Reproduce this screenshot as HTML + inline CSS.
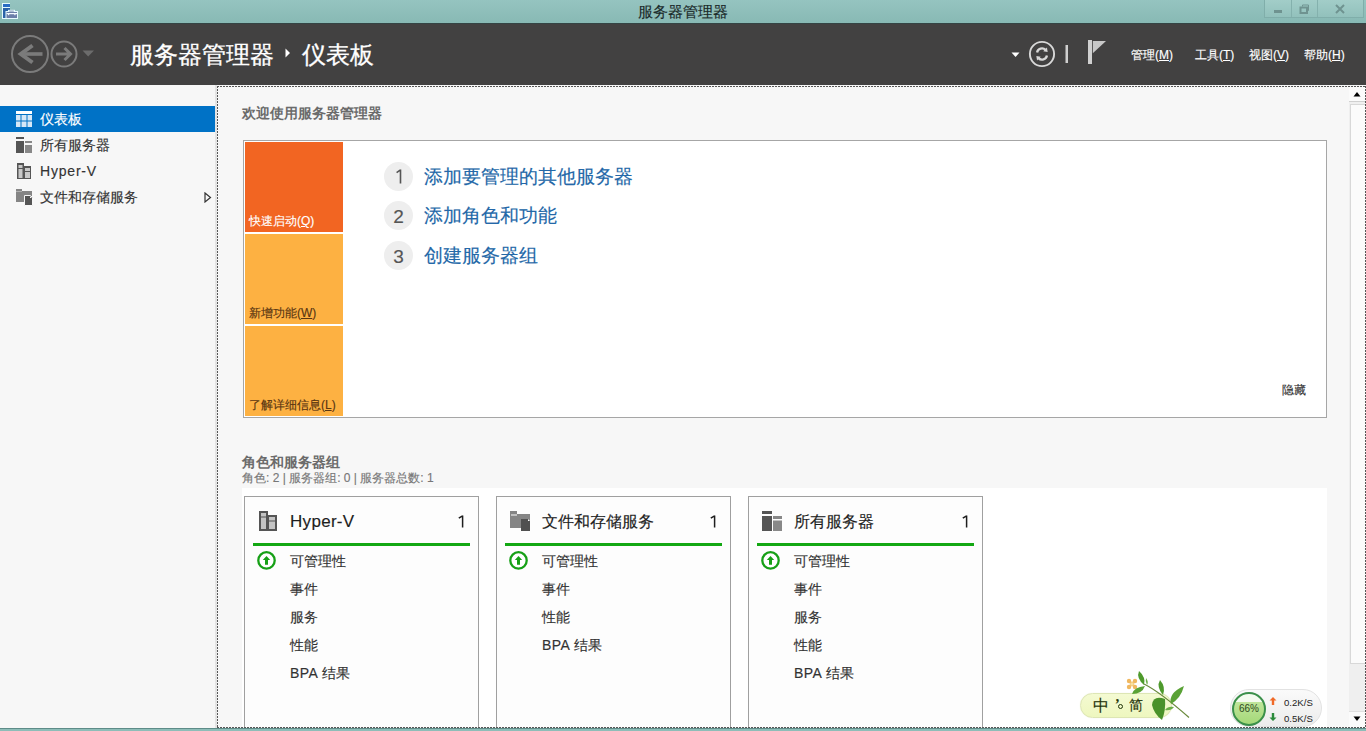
<!DOCTYPE html>
<html><head><meta charset="utf-8">
<style>
*{margin:0;padding:0;box-sizing:border-box}
html,body{width:1366px;height:731px;overflow:hidden;background:#f7f7f7;font-family:"Liberation Sans",sans-serif;color:#333;-webkit-text-stroke-width:0.15px}
.abs{position:absolute}
#titlebar{left:0;top:0;width:1366px;height:23px;background:linear-gradient(#95c4c0,#88b9b4)}
#title{left:0;top:0;width:1366px;text-align:center;font-size:15px;line-height:23px;color:#1b2b2b}
#header{left:0;top:23px;width:1366px;height:62px;background:#424141}
#nav{left:0;top:85px;width:215px;height:643px;background:#f7f7f7}
.navitem{position:absolute;left:0;width:215px;height:26px;font-size:14px;line-height:26px;color:#333}
.navitem span{position:absolute;left:40px;top:0}
.navitem svg{position:absolute;left:16px}
#bottom{left:0;top:728px;width:1366px;height:3px;background:#8dbdb8;border-top:1px solid #5e8c88}
.dotx{height:1px;background:repeating-linear-gradient(90deg,#575757 0 2px,transparent 2px 3px)}
.doty{width:1px;background:repeating-linear-gradient(180deg,#575757 0 2px,transparent 2px 3px)}
.h2{font-size:14px;font-weight:bold;color:#6b6b6b;-webkit-text-stroke-width:0}
#welcome{left:243px;top:140px;width:1084px;height:278px;background:#fff;border:1px solid #a6a6a6}
.tile{position:absolute;left:1px;width:98px;height:90px;font-size:12px}
.tile span{position:absolute;left:4px;bottom:4px;line-height:14px}
.step{position:absolute;left:140px;height:30px}
.step .c{position:absolute;left:0;top:0;width:29px;height:29px;border-radius:50%;background:#eeeeee;color:#555;font-size:19px;line-height:31px;text-align:center}
.step .t{position:absolute;left:40px;top:0;white-space:nowrap;font-size:18.67px;line-height:29px;color:#2468a8}
.card{position:absolute;top:496px;width:235px;height:231px;border:1px solid #a0a0a0;border-bottom:none;background:#fdfdfd}
.card .ttl{position:absolute;left:45px;top:14px;font-size:16px;line-height:22px;color:#1e1e1e;white-space:nowrap}
.card .cnt{position:absolute;right:13px;top:14px;font-size:17px;line-height:22px;color:#1e1e1e}
.card .cnt1{position:absolute;left:213px;top:18px}
.card .gl{position:absolute;left:8px;top:46px;width:217px;height:3px;background:#13a813}
.card .row{position:absolute;left:45px;font-size:14px;line-height:20px;color:#333;white-space:nowrap}
.card .ok{position:absolute;left:12px;top:54px}
.card .ico{position:absolute;left:14px;top:14px}
</style></head><body>
<div id="titlebar" class="abs"></div>
<!-- app icon -->
<svg class="abs" style="left:2px;top:3px" width="16" height="16" viewBox="0 0 16 16">
  <path d="M0 0H8V8H16V16H0Z" fill="#e6fbff"/>
  <rect x="1" y="1" width="7" height="3" fill="#2a6cc4"/>
  <rect x="1" y="5" width="7" height="10" fill="#2a62a8"/>
  <rect x="3.5" y="8" width="12" height="8" fill="#e6fbff"/>
  <rect x="6" y="6.8" width="7" height="2" fill="#e6fbff"/>
  <rect x="7.2" y="7.6" width="4.6" height="1" fill="#8090b0"/>
  <rect x="4.5" y="9" width="10.5" height="6" fill="#6b7fa9"/>
  <rect x="4.5" y="10" width="10.5" height="1.2" fill="#f4fbff"/>
  <rect x="6" y="11" width="1.2" height="1.2" fill="#f4fbff"/>
  <rect x="12.3" y="11" width="1.2" height="1.2" fill="#f4fbff"/>
</svg>
<div id="title" class="abs">服务器管理器</div>
<!-- window buttons -->
<div class="abs" style="left:1264px;top:0;width:100px;height:18px;border:1px solid #80aeaa;border-top:none;background:linear-gradient(#a2cdc8,#92c1bc)"></div>
<div class="abs" style="left:1291px;top:0;width:1px;height:17px;background:#84b1ad"></div>
<div class="abs" style="left:1317px;top:0;width:1px;height:17px;background:#84b1ad"></div>
<div class="abs" style="left:1274px;top:10px;width:8px;height:2.5px;background:#6f9390"></div>
<svg class="abs" style="left:1299px;top:4px" width="11" height="10" viewBox="0 0 11 10"><path d="M3.5 2.5V1H9.5V6.5H8" fill="none" stroke="#6f9390" stroke-width="1"/><rect x="1.5" y="3.5" width="6.5" height="5.5" fill="none" stroke="#6f9390" stroke-width="2"/></svg>
<svg class="abs" style="left:1335px;top:4px" width="10" height="10" viewBox="0 0 10 10"><path d="M1 1L9 9M9 1L1 9" stroke="#6f9390" stroke-width="2"/></svg>

<div id="header" class="abs"></div>
<div class="abs" style="left:0;top:23px;width:1366px;height:1px;background:#344444"></div>
<!-- back/forward -->
<svg class="abs" style="left:0;top:23px" width="100" height="62" viewBox="0 0 100 62">
  <circle cx="30" cy="31" r="18" fill="none" stroke="#7b7b7b" stroke-width="2"/>
  <path d="M21 31H42.5" fill="none" stroke="#7b7b7b" stroke-width="3.6"/><path d="M32.5 22.5L20.8 31L32.5 39.5" fill="none" stroke="#7b7b7b" stroke-width="4" stroke-linejoin="miter"/>
  <circle cx="64" cy="31" r="12.5" fill="none" stroke="#7b7b7b" stroke-width="2"/>
  <path d="M56 31H70M64.5 25L70.5 31L64.5 37" fill="none" stroke="#7b7b7b" stroke-width="3"/>
  <path d="M82.5 27.5H94L88.2 33.5Z" fill="#6c6c6c"/>
</svg>
<div class="abs" style="left:130px;top:39px;font-size:24px;line-height:32px;color:#fff;white-space:nowrap;-webkit-text-stroke:0.3px #fff">服务器管理器</div>
<svg class="abs" style="left:285px;top:48px" width="6" height="10" viewBox="0 0 6 10"><path d="M0.5 0.5L5 5L0.5 9.5Z" fill="#fff"/></svg>
<div class="abs" style="left:302px;top:39px;font-size:24px;line-height:32px;color:#fff;white-space:nowrap;-webkit-text-stroke:0.3px #fff">仪表板</div>
<!-- right header -->
<svg class="abs" style="left:1000px;top:23px" width="120" height="62" viewBox="0 0 120 62">
  <path d="M11.5 29.5H19.5L15.5 34Z" fill="#fff"/>
  <circle cx="42" cy="31" r="12.1" fill="none" stroke="#d8d8d8" stroke-width="1.9"/>
  <path d="M37.08 29.53A5.0 5.0 0 0 1 45.54 26.86" fill="none" stroke="#d8d8d8" stroke-width="2.3"/><path d="M47.66 28.99L46.95 24.60L43.27 28.28Z" fill="#d8d8d8"/><path d="M46.92 32.47A5.0 5.0 0 0 1 38.46 35.14" fill="none" stroke="#d8d8d8" stroke-width="2.3"/><path d="M36.34 33.01L37.05 37.40L40.73 33.72Z" fill="#d8d8d8"/>
  <rect x="65.5" y="22" width="2.5" height="18" fill="#cfcfcf"/>
  <rect x="88" y="17" width="4" height="24" fill="#d0d0d0"/>
  <path d="M92.8 18H106L92.8 30.2Z" fill="#c8c8c8"/>
</svg>
<div class="abs" style="left:1131px;top:47px;font-size:12px;line-height:16px;color:#fff;white-space:nowrap">管理(<u>M</u>)</div>
<div class="abs" style="left:1195px;top:47px;font-size:12px;line-height:16px;color:#fff;white-space:nowrap">工具(<u>T</u>)</div>
<div class="abs" style="left:1249px;top:47px;font-size:12px;line-height:16px;color:#fff;white-space:nowrap">视图(<u>V</u>)</div>
<div class="abs" style="left:1304px;top:47px;font-size:12px;line-height:16px;color:#fff;white-space:nowrap">帮助(<u>H</u>)</div>

<div id="nav" class="abs"></div>
<div class="abs" style="left:215px;top:85px;width:2px;height:643px;background:#e4e4e4"></div>
<div class="navitem" style="top:106px;background:#0072c6;color:#fff">
  <svg style="top:5px" width="16" height="16" viewBox="0 0 16 16"><rect x="0" y="0" width="16" height="3" fill="#fff"/><rect x="0" y="4" width="16" height="12" fill="#d6e8f7"/><rect x="4.5" y="4" width="1" height="12" fill="#0072c6"/><rect x="10.5" y="4" width="1" height="12" fill="#0072c6"/><rect x="0" y="9.5" width="16" height="1" fill="#0072c6"/></svg>
  <span>仪表板</span></div>
<div class="navitem" style="top:132px">
  <svg style="top:5px" width="16" height="16" viewBox="0 0 16 16"><rect x="0" y="0" width="8" height="2" fill="#555"/><rect x="0" y="4" width="8" height="12" fill="#555"/><rect x="9" y="4" width="7" height="2" fill="#888"/><rect x="9" y="8" width="7" height="8" fill="#888"/></svg>
  <span>所有服务器</span></div>
<div class="navitem" style="top:158px">
  <svg style="top:5px" width="16" height="16" viewBox="0 0 16 16"><path d="M1 0H8V3H15V16H1Z" fill="#555"/><rect x="2.5" y="2" width="4" height="3" fill="#c8c8c8"/><rect x="2.5" y="6" width="4" height="9" fill="#c8c8c8"/><rect x="9" y="5" width="5" height="3" fill="#c8c8c8"/><rect x="9" y="9" width="5" height="6" fill="#c8c8c8"/></svg>
  <span style="letter-spacing:0.8px">Hyper-V</span></div>
<div class="navitem" style="top:184px">
  <svg style="top:5px" width="17" height="17" viewBox="0 0 17 17"><path d="M0 0H6V2H16V13H0Z" fill="#858585"/><rect x="0" y="2" width="6" height="1" fill="#b0b0b0"/><path d="M8.5 6.5H14.5L16.5 8.5V16.5H8.5Z" fill="#555" stroke="#f7f7f7" stroke-width="1"/><path d="M14 7L16 9H14Z" fill="#f7f7f7"/></svg>
  <span>文件和存储服务</span>
  <svg style="left:204px;top:8px" width="8" height="11" viewBox="0 0 8 11"><path d="M1 1L6.5 5.5L1 10Z" fill="none" stroke="#333" stroke-width="1.2"/></svg>
</div>

<div class="abs h2" style="left:242px;top:103px;line-height:20px">欢迎使用服务器管理器</div>
<div id="welcome" class="abs">
  <div class="tile" style="top:1px;background:#f26522;color:#fff"><span>快速启动(<u>Q</u>)</span></div>
  <div class="tile" style="top:93px;background:#fdb142;color:#5a3612"><span>新增功能(<u>W</u>)</span></div>
  <div class="tile" style="top:185px;background:#fdb142;color:#5a3612"><span>了解详细信息(<u>L</u>)</span></div>
  <div class="step" style="top:21px"><div class="c"><svg style="position:absolute;left:12px;top:7px" width="7" height="15" viewBox="0 0 7 15"><path d="M4.5 0.6V14.5M4.5 0.9L0.6 3.6" fill="none" stroke="#555" stroke-width="1.6"/></svg></div><div class="t">添加要管理的其他服务器</div></div>
  <div class="step" style="top:60px"><div class="c">2</div><div class="t">添加角色和功能</div></div>
  <div class="step" style="top:100px"><div class="c">3</div><div class="t">创建服务器组</div></div>
  <div class="abs" style="left:1038px;top:241px;font-size:12px;line-height:16px;color:#333">隐藏</div>
</div>

<div class="abs h2" style="left:242px;top:453px;line-height:18px">角色和服务器组</div>
<div class="abs" style="left:242px;top:470px;font-size:12px;line-height:16px;color:#777;white-space:nowrap">角色: 2 | 服务器组: 0 | 服务器总数: 1</div>
<div class="abs" style="left:242px;top:488px;width:1085px;height:239px;background:#fff"></div>

<!-- cards -->
<div class="card" style="left:244px">
  <svg class="ico" style="left:14px;top:14px" width="18" height="20" viewBox="0 0 18 20"><path d="M0 0H9V4H18V20H0Z" fill="#555"/><rect x="2" y="2" width="5" height="3.5" fill="#c4c4c4"/><rect x="2" y="6.5" width="5" height="11.5" fill="#c4c4c4"/><rect x="10" y="6" width="6" height="3.5" fill="#c4c4c4"/><rect x="10" y="10.5" width="6" height="7.5" fill="#c4c4c4"/></svg>
  <div class="ttl" style="font-size:17px;letter-spacing:0.3px">Hyper-V</div><svg class="cnt1" width="7" height="13" viewBox="0 0 7 13"><path d="M4.6 0.5V12.5M4.6 0.8L0.8 3.2" fill="none" stroke="#1e1e1e" stroke-width="1.5"/></svg><div class="gl"></div>
  <svg class="ok" width="20" height="20" viewBox="0 0 20 20"><circle cx="9.5" cy="9.4" r="8.2" fill="#fff" stroke="#16a016" stroke-width="2.3"/><path d="M9.5 5L13.2 9.1H11V13.8H8V9.1H5.8Z" fill="#16a016"/></svg>
  <div class="row" style="top:54px">可管理性</div>
  <div class="row" style="top:82px">事件</div>
  <div class="row" style="top:110px">服务</div>
  <div class="row" style="top:138px">性能</div>
  <div class="row" style="top:166px"><span style="letter-spacing:0.4px">BPA</span> 结果</div>
</div>
<div class="card" style="left:496px">
  <svg class="ico" style="left:13px;top:14px" width="21" height="20" viewBox="0 0 21 20"><path d="M0 0H7V3H20V14H11V17H0Z" fill="#858585"/><rect x="1" y="3.5" width="6" height="1" fill="#fdfdfd"/><path d="M11 8H18L20 10V20H11Z" fill="#505050"/><path d="M18 8L20 10H18Z" fill="#fdfdfd"/></svg>
  <div class="ttl">文件和存储服务</div><svg class="cnt1" width="7" height="13" viewBox="0 0 7 13"><path d="M4.6 0.5V12.5M4.6 0.8L0.8 3.2" fill="none" stroke="#1e1e1e" stroke-width="1.5"/></svg><div class="gl"></div>
  <svg class="ok" width="20" height="20" viewBox="0 0 20 20"><circle cx="9.5" cy="9.4" r="8.2" fill="#fff" stroke="#16a016" stroke-width="2.3"/><path d="M9.5 5L13.2 9.1H11V13.8H8V9.1H5.8Z" fill="#16a016"/></svg>
  <div class="row" style="top:54px">可管理性</div>
  <div class="row" style="top:82px">事件</div>
  <div class="row" style="top:110px">性能</div>
  <div class="row" style="top:138px"><span style="letter-spacing:0.4px">BPA</span> 结果</div>
</div>
<div class="card" style="left:748px">
  <svg class="ico" style="left:13px;top:14px" width="20" height="20" viewBox="0 0 20 20"><rect x="0" y="0" width="10" height="3" fill="#555"/><rect x="0" y="5" width="10" height="15" fill="#555"/><rect x="11" y="5" width="9" height="3" fill="#888"/><rect x="11" y="9.5" width="9" height="10.5" fill="#888"/></svg>
  <div class="ttl">所有服务器</div><svg class="cnt1" width="7" height="13" viewBox="0 0 7 13"><path d="M4.6 0.5V12.5M4.6 0.8L0.8 3.2" fill="none" stroke="#1e1e1e" stroke-width="1.5"/></svg><div class="gl"></div>
  <svg class="ok" width="20" height="20" viewBox="0 0 20 20"><circle cx="9.5" cy="9.4" r="8.2" fill="#fff" stroke="#16a016" stroke-width="2.3"/><path d="M9.5 5L13.2 9.1H11V13.8H8V9.1H5.8Z" fill="#16a016"/></svg>
  <div class="row" style="top:54px">可管理性</div>
  <div class="row" style="top:82px">事件</div>
  <div class="row" style="top:110px">服务</div>
  <div class="row" style="top:138px">性能</div>
  <div class="row" style="top:166px"><span style="letter-spacing:0.4px">BPA</span> 结果</div>
</div>
<!-- focus rect -->
<div class="abs dotx" style="left:217px;top:86px;width:1149px"></div>
<div class="abs dotx" style="left:217px;top:727px;width:1149px"></div>
<div class="abs doty" style="left:217px;top:86px;height:642px"></div>
<div class="abs doty" style="left:1365px;top:86px;height:642px"></div>

<!-- bottom cover below content -->
<div class="abs" style="left:0;top:728px;width:1366px;height:3px;background:#8dbdb8;border-top:1px solid #5e8c88"></div>

<!-- scrollbar -->
<div class="abs" style="left:1349px;top:87px;width:16px;height:640px;background:#efefef"></div>
<div class="abs" style="left:1349px;top:87px;width:16px;height:15px;background:#fbfbfb;border-bottom:1px solid #d0d0d0"></div>
<svg class="abs" style="left:1353px;top:91px" width="8" height="6" viewBox="0 0 8 6"><path d="M0.5 5.5L4 1L7.5 5.5Z" fill="#000"/></svg>
<div class="abs" style="left:1350px;top:104px;width:15px;height:560px;background:#fbfbfb;border:1px solid #d8d8d8;border-right:none"></div>
<div class="abs" style="left:1349px;top:711px;width:16px;height:16px;background:#fbfbfb;border-top:1px solid #e0e0e0"></div>
<svg class="abs" style="left:1353px;top:716px" width="8" height="6" viewBox="0 0 8 6"><path d="M0.5 0.5L4 5L7.5 0.5Z" fill="#000"/></svg>

<!-- IME bar -->
<div class="abs" style="left:1080px;top:693px;width:92px;height:25px;border-radius:12.5px;background:linear-gradient(#f4fad2,#eef7bf);border:1px solid #dde6b4;box-shadow:0 0 1px #e8eccc"></div>
<div class="abs" style="left:1093px;top:696px;font-family:'Liberation Serif',serif;font-size:16px;line-height:20px;color:#1f3308">中</div>
<div class="abs" style="left:1115px;top:695px;font-family:'Liberation Serif',serif;font-size:14px;line-height:20px;color:#1f3308;font-weight:bold">’</div>
<div class="abs" style="left:1118px;top:704px;width:5px;height:5px;border-radius:50%;border:1.3px solid #1f3308"></div>
<div class="abs" style="left:1129px;top:696px;font-family:'Liberation Serif',serif;font-size:14px;line-height:20px;color:#1f3308">简</div>
<svg class="abs" style="left:1120px;top:670px" width="72" height="56" viewBox="0 0 72 56">
  <path d="M24 14Q40 22 69 47.5" fill="none" stroke="#6a8a3c" stroke-width="1.2"/>
  <g fill="#f0b860"><circle cx="12" cy="14" r="2.4"/><circle cx="9" cy="11" r="2.2"/><circle cx="15" cy="11" r="2.2"/><circle cx="9" cy="17" r="2.2"/><circle cx="15" cy="17" r="2.2"/></g>
  <circle cx="12" cy="14" r="1.8" fill="#f8e0a0"/>
  <path d="M24 15Q16 8 19 1Q26 7 24 15Z" fill="#4e9a2c"/>
  <path d="M27 15Q25 11 26 8Q29 12 27 15Z" fill="#6cae48"/>
  <path d="M25 16Q14 17 12 24Q22 24 25 16Z" fill="#5aa236"/>
  <path d="M43 25Q36 17 40 10Q46 17 43 25Z" fill="#4e9a2c"/>
  <path d="M51 34Q48 23 64 16Q61 28 51 34Z" fill="#5aa236"/>
  <path d="M45 29Q33 25 32 35Q34 44 42 50Q46 40 45 29Z" fill="#4a922a"/>
  <path d="M54 37Q48 36 45 40Q51 41 54 37Z" fill="#6cae48"/>
</svg>
<!-- net monitor -->
<div class="abs" style="left:1230px;top:689px;width:92px;height:38px;border-radius:19px;background:linear-gradient(#fafafa,#ececec);border:1px solid #e2e2e2"></div>
<div class="abs" style="left:1232px;top:692px;width:34px;height:34px;border-radius:50%;border:2.5px solid #3b904a;background:linear-gradient(#f4fbef 0 28%,#bfe59a 28%,#a4d878)"></div>
<div class="abs" style="left:1232px;top:702px;width:34px;text-align:center;font-size:10px;line-height:14px;color:#2f4a20;-webkit-text-stroke-width:0">66%</div>
<svg class="abs" style="left:1269px;top:697px" width="8" height="8" viewBox="0 0 8 8"><path d="M4 0L7.5 3.5H5.2V8H2.8V3.5H0.5Z" fill="#f06a28"/></svg>
<svg class="abs" style="left:1269px;top:713px" width="8" height="8" viewBox="0 0 8 8"><path d="M4 8L7.5 4.5H5.2V0H2.8V4.5H0.5Z" fill="#2a8a3a"/></svg>
<div class="abs" style="left:1284px;top:697px;font-size:9.6px;line-height:11px;color:#222;-webkit-text-stroke-width:0">0.2K/S</div>
<div class="abs" style="left:1284px;top:713px;font-size:9.6px;line-height:11px;color:#222;-webkit-text-stroke-width:0">0.5K/S</div>
</body></html>
